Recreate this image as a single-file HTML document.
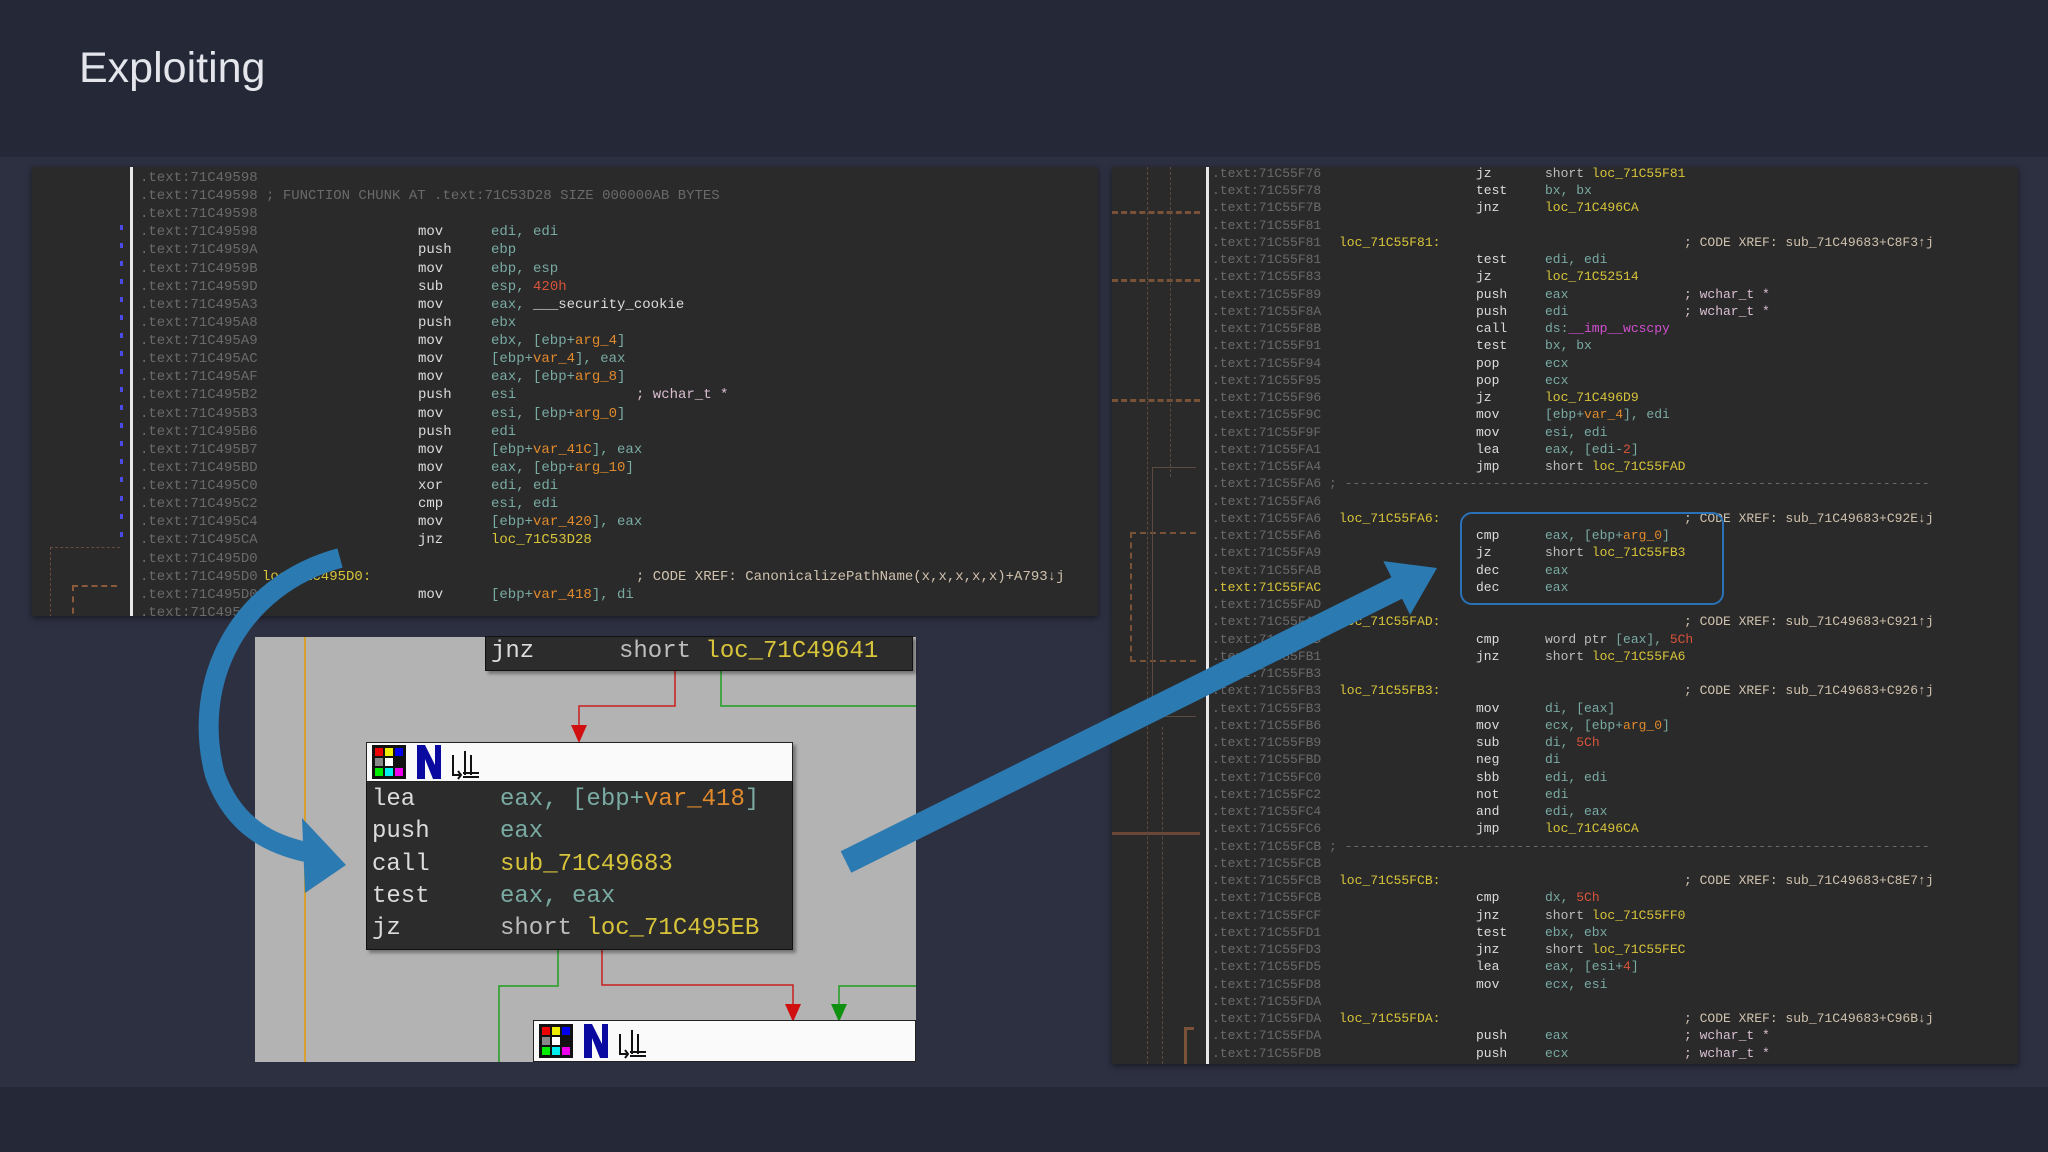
<!DOCTYPE html>
<html><head><meta charset="utf-8"><style>
*{margin:0;padding:0;box-sizing:border-box}
body{width:2048px;height:1152px;background:#252837;position:relative;overflow:hidden;font-family:"Liberation Mono",monospace}
.band{position:absolute;left:0;top:157px;width:2048px;height:930px;background:#2d3041}
h1{position:absolute;left:79px;top:44px;font:43px "Liberation Sans",sans-serif;color:#e4e6ec;font-weight:normal}
.pan{position:absolute;background:#2a2a2a;overflow:hidden;box-shadow:0 2px 6px rgba(0,0,0,.5)}
.row{position:absolute;left:0;height:18px;line-height:18px;white-space:pre;width:100%}
.row span{position:absolute;top:0}
.L .row{font-size:14px;margin-top:3px}
.L .row>span{margin-left:4px}
.R .row{font-size:13px;height:17px;line-height:17px;margin-top:2px}
.a{color:#6a6a6a}.m{color:#dcdcdc}.r{color:#7aaba3}.o{color:#e08a2c}.y{color:#d8c43a}.n{color:#d8533a}.c{color:#cfc1ad}.w{color:#d9bfd2}.p{color:#d24fd0}.s{color:#bdbdbd}
.vl{position:absolute;background:#e8e8e8;width:3px}
.dot{position:absolute;width:3px;height:5px;background:#4a4ae8}
.g{position:absolute;background:#b3b3b3;overflow:hidden}
.box{position:absolute;background:#2c2c2c;border:1px solid #111;box-shadow:3px 3px 3px rgba(0,0,0,.35)}
.hd{position:absolute;background:#fafafa;border:1px solid #222}
.gl{position:absolute;font-size:24px;white-space:pre;line-height:32px}
</style></head><body>
<div class="band"></div>
<h1>Exploiting</h1>

<div class="pan L" style="left:32px;top:167px;width:1066px;height:449px">
<div class="vl" style="left:98px;top:0;height:449px"></div>
<div style="position:absolute;left:18px;top:380px;width:70px;border-top:1px dashed #6a4a3a"></div>
<div style="position:absolute;left:18px;top:380px;height:70px;border-left:1px dashed #6a4a3a"></div>
<div style="position:absolute;left:40px;top:418px;width:45px;border-top:2px dashed #8a5a3a"></div>
<div style="position:absolute;left:40px;top:418px;height:40px;border-left:2px dashed #8a5a3a"></div>
<div class="dot" style="left:88px;top:58px"></div><div class="dot" style="left:88px;top:76px"></div><div class="dot" style="left:88px;top:94px"></div><div class="dot" style="left:88px;top:112px"></div><div class="dot" style="left:88px;top:130px"></div><div class="dot" style="left:88px;top:148px"></div><div class="dot" style="left:88px;top:166px"></div><div class="dot" style="left:88px;top:184px"></div><div class="dot" style="left:88px;top:202px"></div><div class="dot" style="left:88px;top:220px"></div><div class="dot" style="left:88px;top:238px"></div><div class="dot" style="left:88px;top:256px"></div><div class="dot" style="left:88px;top:274px"></div><div class="dot" style="left:88px;top:292px"></div><div class="dot" style="left:88px;top:310px"></div><div class="dot" style="left:88px;top:329px"></div><div class="dot" style="left:88px;top:347px"></div><div class="dot" style="left:88px;top:365px"></div>
<div class="row" style="top:-1px"><span class="a" style="left:104px">.text:71C49598</span></div>
<div class="row" style="top:17px"><span class="a" style="left:104px">.text:71C49598 ; FUNCTION CHUNK AT .text:71C53D28 SIZE 000000AB BYTES</span></div>
<div class="row" style="top:35px"><span class="a" style="left:104px">.text:71C49598</span></div>
<div class="row" style="top:53px"><span class="a" style="left:104px">.text:71C49598</span><span class="m" style="left:382px">mov</span><span class="r" style="left:455px">edi, edi</span></div>
<div class="row" style="top:71px"><span class="a" style="left:104px">.text:71C4959A</span><span class="m" style="left:382px">push</span><span class="r" style="left:455px">ebp</span></div>
<div class="row" style="top:90px"><span class="a" style="left:104px">.text:71C4959B</span><span class="m" style="left:382px">mov</span><span class="r" style="left:455px">ebp, esp</span></div>
<div class="row" style="top:108px"><span class="a" style="left:104px">.text:71C4959D</span><span class="m" style="left:382px">sub</span><span style="left:455px"><span class="r" style="position:static">esp, </span><span class="n" style="position:static">420h</span></span></div>
<div class="row" style="top:126px"><span class="a" style="left:104px">.text:71C495A3</span><span class="m" style="left:382px">mov</span><span style="left:455px"><span class="r" style="position:static">eax, </span><span class="m" style="position:static">___security_cookie</span></span></div>
<div class="row" style="top:144px"><span class="a" style="left:104px">.text:71C495A8</span><span class="m" style="left:382px">push</span><span class="r" style="left:455px">ebx</span></div>
<div class="row" style="top:162px"><span class="a" style="left:104px">.text:71C495A9</span><span class="m" style="left:382px">mov</span><span style="left:455px"><span class="r" style="position:static">ebx, [ebp+</span><span class="o" style="position:static">arg_4</span><span class="r" style="position:static">]</span></span></div>
<div class="row" style="top:180px"><span class="a" style="left:104px">.text:71C495AC</span><span class="m" style="left:382px">mov</span><span style="left:455px"><span class="r" style="position:static">[ebp+</span><span class="o" style="position:static">var_4</span><span class="r" style="position:static">], eax</span></span></div>
<div class="row" style="top:198px"><span class="a" style="left:104px">.text:71C495AF</span><span class="m" style="left:382px">mov</span><span style="left:455px"><span class="r" style="position:static">eax, [ebp+</span><span class="o" style="position:static">arg_8</span><span class="r" style="position:static">]</span></span></div>
<div class="row" style="top:216px"><span class="a" style="left:104px">.text:71C495B2</span><span class="m" style="left:382px">push</span><span class="r" style="left:455px">esi</span><span class="w" style="left:600px">; wchar_t *</span></div>
<div class="row" style="top:235px"><span class="a" style="left:104px">.text:71C495B3</span><span class="m" style="left:382px">mov</span><span style="left:455px"><span class="r" style="position:static">esi, [ebp+</span><span class="o" style="position:static">arg_0</span><span class="r" style="position:static">]</span></span></div>
<div class="row" style="top:253px"><span class="a" style="left:104px">.text:71C495B6</span><span class="m" style="left:382px">push</span><span class="r" style="left:455px">edi</span></div>
<div class="row" style="top:271px"><span class="a" style="left:104px">.text:71C495B7</span><span class="m" style="left:382px">mov</span><span style="left:455px"><span class="r" style="position:static">[ebp+</span><span class="o" style="position:static">var_41C</span><span class="r" style="position:static">], eax</span></span></div>
<div class="row" style="top:289px"><span class="a" style="left:104px">.text:71C495BD</span><span class="m" style="left:382px">mov</span><span style="left:455px"><span class="r" style="position:static">eax, [ebp+</span><span class="o" style="position:static">arg_10</span><span class="r" style="position:static">]</span></span></div>
<div class="row" style="top:307px"><span class="a" style="left:104px">.text:71C495C0</span><span class="m" style="left:382px">xor</span><span class="r" style="left:455px">edi, edi</span></div>
<div class="row" style="top:325px"><span class="a" style="left:104px">.text:71C495C2</span><span class="m" style="left:382px">cmp</span><span class="r" style="left:455px">esi, edi</span></div>
<div class="row" style="top:343px"><span class="a" style="left:104px">.text:71C495C4</span><span class="m" style="left:382px">mov</span><span style="left:455px"><span class="r" style="position:static">[ebp+</span><span class="o" style="position:static">var_420</span><span class="r" style="position:static">], eax</span></span></div>
<div class="row" style="top:361px"><span class="a" style="left:104px">.text:71C495CA</span><span class="m" style="left:382px">jnz</span><span class="y" style="left:455px">loc_71C53D28</span></div>
<div class="row" style="top:380px"><span class="a" style="left:104px">.text:71C495D0</span></div>
<div class="row" style="top:398px"><span class="a" style="left:104px">.text:71C495D0</span><span class="y" style="left:226px">loc_71C495D0:</span><span class="c" style="left:600px">; CODE XREF: CanonicalizePathName(x,x,x,x,x)+A793↓j</span></div>
<div class="row" style="top:416px"><span class="a" style="left:104px">.text:71C495D0</span><span class="m" style="left:382px">mov</span><span style="left:455px"><span class="r" style="position:static">[ebp+</span><span class="o" style="position:static">var_418</span><span class="r" style="position:static">], di</span></span></div>
<div class="row" style="top:434px"><span class="a" style="left:104px">.text:71C495D7</span></div>
</div>

<div class="pan R" style="left:1112px;top:167px;width:906px;height:897px">
<div class="vl" style="left:94px;top:0;height:897px"></div>
<div style="position:absolute;left:0;top:44px;width:88px;border-top:3px dashed #7a5238"></div>
<div style="position:absolute;left:0;top:112px;width:88px;border-top:3px dashed #7a5238"></div>
<div style="position:absolute;left:0;top:232px;width:88px;border-top:3px dashed #7a5238"></div>
<div style="position:absolute;left:0;top:665px;width:88px;border-top:3px solid #6a4838"></div>
<div style="position:absolute;left:35px;top:0;height:897px;border-left:1px dashed #5a4a40"></div>
<div style="position:absolute;left:58px;top:0;height:310px;border-left:1px dashed #5a4a40"></div>
<div style="position:absolute;left:18px;top:365px;width:66px;height:130px;border:2px dashed #7a5238;border-right:none"></div>
<div style="position:absolute;left:40px;top:300px;width:44px;height:250px;border:1px solid #5a4a40;border-right:none"></div>
<div style="position:absolute;left:50px;top:560px;height:337px;border-left:1px dashed #5a4a40"></div>
<div style="position:absolute;left:72px;top:860px;width:10px;height:40px;border-left:3px solid #7a5238;border-top:3px solid #7a5238"></div>
<div class="row" style="top:-4px"><span class="a" style="left:100px">.text:71C55F76</span><span class="m" style="left:364px">jz</span><span style="left:433px"><span class="s" style="position:static">short </span><span class="y" style="position:static">loc_71C55F81</span></span></div>
<div class="row" style="top:13px"><span class="a" style="left:100px">.text:71C55F78</span><span class="m" style="left:364px">test</span><span class="r" style="left:433px">bx, bx</span></div>
<div class="row" style="top:30px"><span class="a" style="left:100px">.text:71C55F7B</span><span class="m" style="left:364px">jnz</span><span class="y" style="left:433px">loc_71C496CA</span></div>
<div class="row" style="top:48px"><span class="a" style="left:100px">.text:71C55F81</span></div>
<div class="row" style="top:65px"><span class="a" style="left:100px">.text:71C55F81</span><span class="y" style="left:227px">loc_71C55F81:</span><span class="c" style="left:572px">; CODE XREF: sub_71C49683+C8F3↑j</span></div>
<div class="row" style="top:82px"><span class="a" style="left:100px">.text:71C55F81</span><span class="m" style="left:364px">test</span><span class="r" style="left:433px">edi, edi</span></div>
<div class="row" style="top:99px"><span class="a" style="left:100px">.text:71C55F83</span><span class="m" style="left:364px">jz</span><span class="y" style="left:433px">loc_71C52514</span></div>
<div class="row" style="top:117px"><span class="a" style="left:100px">.text:71C55F89</span><span class="m" style="left:364px">push</span><span class="r" style="left:433px">eax</span><span class="w" style="left:572px">; wchar_t *</span></div>
<div class="row" style="top:134px"><span class="a" style="left:100px">.text:71C55F8A</span><span class="m" style="left:364px">push</span><span class="r" style="left:433px">edi</span><span class="w" style="left:572px">; wchar_t *</span></div>
<div class="row" style="top:151px"><span class="a" style="left:100px">.text:71C55F8B</span><span class="m" style="left:364px">call</span><span style="left:433px"><span class="r" style="position:static">ds:</span><span class="p" style="position:static">__imp__wcscpy</span></span></div>
<div class="row" style="top:168px"><span class="a" style="left:100px">.text:71C55F91</span><span class="m" style="left:364px">test</span><span class="r" style="left:433px">bx, bx</span></div>
<div class="row" style="top:186px"><span class="a" style="left:100px">.text:71C55F94</span><span class="m" style="left:364px">pop</span><span class="r" style="left:433px">ecx</span></div>
<div class="row" style="top:203px"><span class="a" style="left:100px">.text:71C55F95</span><span class="m" style="left:364px">pop</span><span class="r" style="left:433px">ecx</span></div>
<div class="row" style="top:220px"><span class="a" style="left:100px">.text:71C55F96</span><span class="m" style="left:364px">jz</span><span class="y" style="left:433px">loc_71C496D9</span></div>
<div class="row" style="top:237px"><span class="a" style="left:100px">.text:71C55F9C</span><span class="m" style="left:364px">mov</span><span style="left:433px"><span class="r" style="position:static">[ebp+</span><span class="o" style="position:static">var_4</span><span class="r" style="position:static">], edi</span></span></div>
<div class="row" style="top:255px"><span class="a" style="left:100px">.text:71C55F9F</span><span class="m" style="left:364px">mov</span><span class="r" style="left:433px">esi, edi</span></div>
<div class="row" style="top:272px"><span class="a" style="left:100px">.text:71C55FA1</span><span class="m" style="left:364px">lea</span><span style="left:433px"><span class="r" style="position:static">eax, [edi-</span><span class="n" style="position:static">2</span><span class="r" style="position:static">]</span></span></div>
<div class="row" style="top:289px"><span class="a" style="left:100px">.text:71C55FA4</span><span class="m" style="left:364px">jmp</span><span style="left:433px"><span class="s" style="position:static">short </span><span class="y" style="position:static">loc_71C55FAD</span></span></div>
<div class="row" style="top:306px"><span class="a" style="left:100px">.text:71C55FA6 ; ---------------------------------------------------------------------------</span></div>
<div class="row" style="top:324px"><span class="a" style="left:100px">.text:71C55FA6</span></div>
<div class="row" style="top:341px"><span class="a" style="left:100px">.text:71C55FA6</span><span class="y" style="left:227px">loc_71C55FA6:</span><span class="c" style="left:572px">; CODE XREF: sub_71C49683+C92E↓j</span></div>
<div class="row" style="top:358px"><span class="a" style="left:100px">.text:71C55FA6</span><span class="m" style="left:364px">cmp</span><span style="left:433px"><span class="r" style="position:static">eax, [ebp+</span><span class="o" style="position:static">arg_0</span><span class="r" style="position:static">]</span></span></div>
<div class="row" style="top:375px"><span class="a" style="left:100px">.text:71C55FA9</span><span class="m" style="left:364px">jz</span><span style="left:433px"><span class="s" style="position:static">short </span><span class="y" style="position:static">loc_71C55FB3</span></span></div>
<div class="row" style="top:393px"><span class="a" style="left:100px">.text:71C55FAB</span><span class="m" style="left:364px">dec</span><span class="r" style="left:433px">eax</span></div>
<div class="row" style="top:410px"><span class="y" style="left:100px">.text:71C55FAC</span><span class="m" style="left:364px">dec</span><span class="r" style="left:433px">eax</span></div>
<div class="row" style="top:427px"><span class="a" style="left:100px">.text:71C55FAD</span></div>
<div class="row" style="top:444px"><span class="a" style="left:100px">.text:71C55FAD</span><span class="y" style="left:227px">loc_71C55FAD:</span><span class="c" style="left:572px">; CODE XREF: sub_71C49683+C921↑j</span></div>
<div class="row" style="top:462px"><span class="a" style="left:100px">.text:71C55FAD</span><span class="m" style="left:364px">cmp</span><span style="left:433px"><span class="s" style="position:static">word ptr </span><span class="r" style="position:static">[eax], </span><span class="n" style="position:static">5Ch</span></span></div>
<div class="row" style="top:479px"><span class="a" style="left:100px">.text:71C55FB1</span><span class="m" style="left:364px">jnz</span><span style="left:433px"><span class="s" style="position:static">short </span><span class="y" style="position:static">loc_71C55FA6</span></span></div>
<div class="row" style="top:496px"><span class="a" style="left:100px">.text:71C55FB3</span></div>
<div class="row" style="top:513px"><span class="a" style="left:100px">.text:71C55FB3</span><span class="y" style="left:227px">loc_71C55FB3:</span><span class="c" style="left:572px">; CODE XREF: sub_71C49683+C926↑j</span></div>
<div class="row" style="top:531px"><span class="a" style="left:100px">.text:71C55FB3</span><span class="m" style="left:364px">mov</span><span class="r" style="left:433px">di, [eax]</span></div>
<div class="row" style="top:548px"><span class="a" style="left:100px">.text:71C55FB6</span><span class="m" style="left:364px">mov</span><span style="left:433px"><span class="r" style="position:static">ecx, [ebp+</span><span class="o" style="position:static">arg_0</span><span class="r" style="position:static">]</span></span></div>
<div class="row" style="top:565px"><span class="a" style="left:100px">.text:71C55FB9</span><span class="m" style="left:364px">sub</span><span style="left:433px"><span class="r" style="position:static">di, </span><span class="n" style="position:static">5Ch</span></span></div>
<div class="row" style="top:582px"><span class="a" style="left:100px">.text:71C55FBD</span><span class="m" style="left:364px">neg</span><span class="r" style="left:433px">di</span></div>
<div class="row" style="top:600px"><span class="a" style="left:100px">.text:71C55FC0</span><span class="m" style="left:364px">sbb</span><span class="r" style="left:433px">edi, edi</span></div>
<div class="row" style="top:617px"><span class="a" style="left:100px">.text:71C55FC2</span><span class="m" style="left:364px">not</span><span class="r" style="left:433px">edi</span></div>
<div class="row" style="top:634px"><span class="a" style="left:100px">.text:71C55FC4</span><span class="m" style="left:364px">and</span><span class="r" style="left:433px">edi, eax</span></div>
<div class="row" style="top:651px"><span class="a" style="left:100px">.text:71C55FC6</span><span class="m" style="left:364px">jmp</span><span class="y" style="left:433px">loc_71C496CA</span></div>
<div class="row" style="top:669px"><span class="a" style="left:100px">.text:71C55FCB ; ---------------------------------------------------------------------------</span></div>
<div class="row" style="top:686px"><span class="a" style="left:100px">.text:71C55FCB</span></div>
<div class="row" style="top:703px"><span class="a" style="left:100px">.text:71C55FCB</span><span class="y" style="left:227px">loc_71C55FCB:</span><span class="c" style="left:572px">; CODE XREF: sub_71C49683+C8E7↑j</span></div>
<div class="row" style="top:720px"><span class="a" style="left:100px">.text:71C55FCB</span><span class="m" style="left:364px">cmp</span><span style="left:433px"><span class="r" style="position:static">dx, </span><span class="n" style="position:static">5Ch</span></span></div>
<div class="row" style="top:738px"><span class="a" style="left:100px">.text:71C55FCF</span><span class="m" style="left:364px">jnz</span><span style="left:433px"><span class="s" style="position:static">short </span><span class="y" style="position:static">loc_71C55FF0</span></span></div>
<div class="row" style="top:755px"><span class="a" style="left:100px">.text:71C55FD1</span><span class="m" style="left:364px">test</span><span class="r" style="left:433px">ebx, ebx</span></div>
<div class="row" style="top:772px"><span class="a" style="left:100px">.text:71C55FD3</span><span class="m" style="left:364px">jnz</span><span style="left:433px"><span class="s" style="position:static">short </span><span class="y" style="position:static">loc_71C55FEC</span></span></div>
<div class="row" style="top:789px"><span class="a" style="left:100px">.text:71C55FD5</span><span class="m" style="left:364px">lea</span><span style="left:433px"><span class="r" style="position:static">eax, [esi+</span><span class="n" style="position:static">4</span><span class="r" style="position:static">]</span></span></div>
<div class="row" style="top:807px"><span class="a" style="left:100px">.text:71C55FD8</span><span class="m" style="left:364px">mov</span><span class="r" style="left:433px">ecx, esi</span></div>
<div class="row" style="top:824px"><span class="a" style="left:100px">.text:71C55FDA</span></div>
<div class="row" style="top:841px"><span class="a" style="left:100px">.text:71C55FDA</span><span class="y" style="left:227px">loc_71C55FDA:</span><span class="c" style="left:572px">; CODE XREF: sub_71C49683+C96B↓j</span></div>
<div class="row" style="top:858px"><span class="a" style="left:100px">.text:71C55FDA</span><span class="m" style="left:364px">push</span><span class="r" style="left:433px">eax</span><span class="w" style="left:572px">; wchar_t *</span></div>
<div class="row" style="top:876px"><span class="a" style="left:100px">.text:71C55FDB</span><span class="m" style="left:364px">push</span><span class="r" style="left:433px">ecx</span><span class="w" style="left:572px">; wchar_t *</span></div>
<div style="position:absolute;left:348px;top:345px;width:264px;height:93px;border:2px solid #2a72b8;border-radius:12px"></div>
</div>

<!-- graph -->
<div class="g" style="left:255px;top:637px;width:661px;height:425px">
<div style="position:absolute;left:49px;top:0;width:2px;height:425px;background:#d8a030"></div>
<svg width="661" height="425" style="position:absolute;left:0;top:0">
<g fill="none" stroke-width="1.5">
<polyline stroke="#c82020" points="420,34 420,69 324,69 324,90"/>
<polyline stroke="#20a020" points="466,34 466,69 661,69"/>
<polyline stroke="#20a020" points="244,425 244,349 303,349 303,313"/>
<polyline stroke="#c82020" points="347,313 347,348 538,348 538,370"/>
<polyline stroke="#20a020" points="661,349 584,349 584,370"/>
</g>
<polygon fill="#d01010" points="316,88 332,88 324,106"/>
<polygon fill="#d01010" points="530,367 546,367 538,385"/>
<polygon fill="#109010" points="576,367 592,367 584,385"/>
</svg>
</div>
<div class="box" style="left:485px;top:636px;width:428px;height:35px">
<div class="gl" style="left:5px;top:-1px"><span class="m">jnz</span></div>
<div class="gl" style="left:133px;top:-1px"><span class="s">short </span><span class="y">loc_71C49641</span></div>
</div>
<div class="box" style="left:366px;top:742px;width:427px;height:208px">
<div class="hd" style="left:-1px;top:-1px;width:427px;height:40px"></div>
<div class="gl" style="left:5px;top:41px"><span class="m">lea</span></div>
<div class="gl" style="left:133px;top:41px"><span class="r">eax, [ebp+</span><span class="o">var_418</span><span class="r">]</span></div>
<div class="gl" style="left:5px;top:73px"><span class="m">push</span></div>
<div class="gl" style="left:133px;top:73px"><span class="r">eax</span></div>
<div class="gl" style="left:5px;top:106px"><span class="m">call</span></div>
<div class="gl" style="left:133px;top:106px"><span class="y">sub_71C49683</span></div>
<div class="gl" style="left:5px;top:138px"><span class="m">test</span></div>
<div class="gl" style="left:133px;top:138px"><span class="r">eax, eax</span></div>
<div class="gl" style="left:5px;top:170px"><span class="m">jz</span></div>
<div class="gl" style="left:133px;top:170px"><span class="s">short </span><span class="y">loc_71C495EB</span></div>
</div>
<div class="hd" style="left:533px;top:1020px;width:383px;height:42px"></div>

<svg width="2048" height="1152" style="position:absolute;left:0;top:0">
<defs>
<g id="ic">
<rect x="0" y="0" width="34" height="34" fill="#111"/>
<rect x="3" y="3" width="8" height="8" fill="#e00"/><rect x="13" y="3" width="8" height="8" fill="#ee0"/><rect x="23" y="3" width="8" height="8" fill="#00e"/>
<rect x="3" y="13" width="8" height="8" fill="#888"/><rect x="13" y="13" width="8" height="8" fill="#fff"/><rect x="23" y="13" width="8" height="8" fill="#111"/>
<rect x="3" y="23" width="8" height="8" fill="#0e0"/><rect x="13" y="23" width="8" height="8" fill="#0ee"/><rect x="23" y="23" width="8" height="8" fill="#e0e"/>
<path d="M45 34V0h8l10 20V0h6v34h-8L53 14v20z" fill="#0a0aa0"/>
<path d="M81 10v20h8M86 26l3 4-3 4M93 6v24M99 10v20M91 32h16M91 28h16" stroke="#111" stroke-width="2" fill="none"/>
</g>
</defs>
<use href="#ic" x="372" y="745"/>
<use href="#ic" x="539" y="1024"/>
<path d="M340 558 C 240 585, 190 680, 215 775 C 235 830, 275 845, 306 852" fill="none" stroke="#2b7ab2" stroke-width="20"/>
<polygon fill="#2b7ab2" points="302,818 346,865 305,893"/>
<polygon fill="#2b7ab2" points="840.7,851.3 1391.4,577.3 1383.3,561.1 1437,568 1410.1,614.9 1402,598.7 851.3,872.7"/>
</svg>
</body></html>
